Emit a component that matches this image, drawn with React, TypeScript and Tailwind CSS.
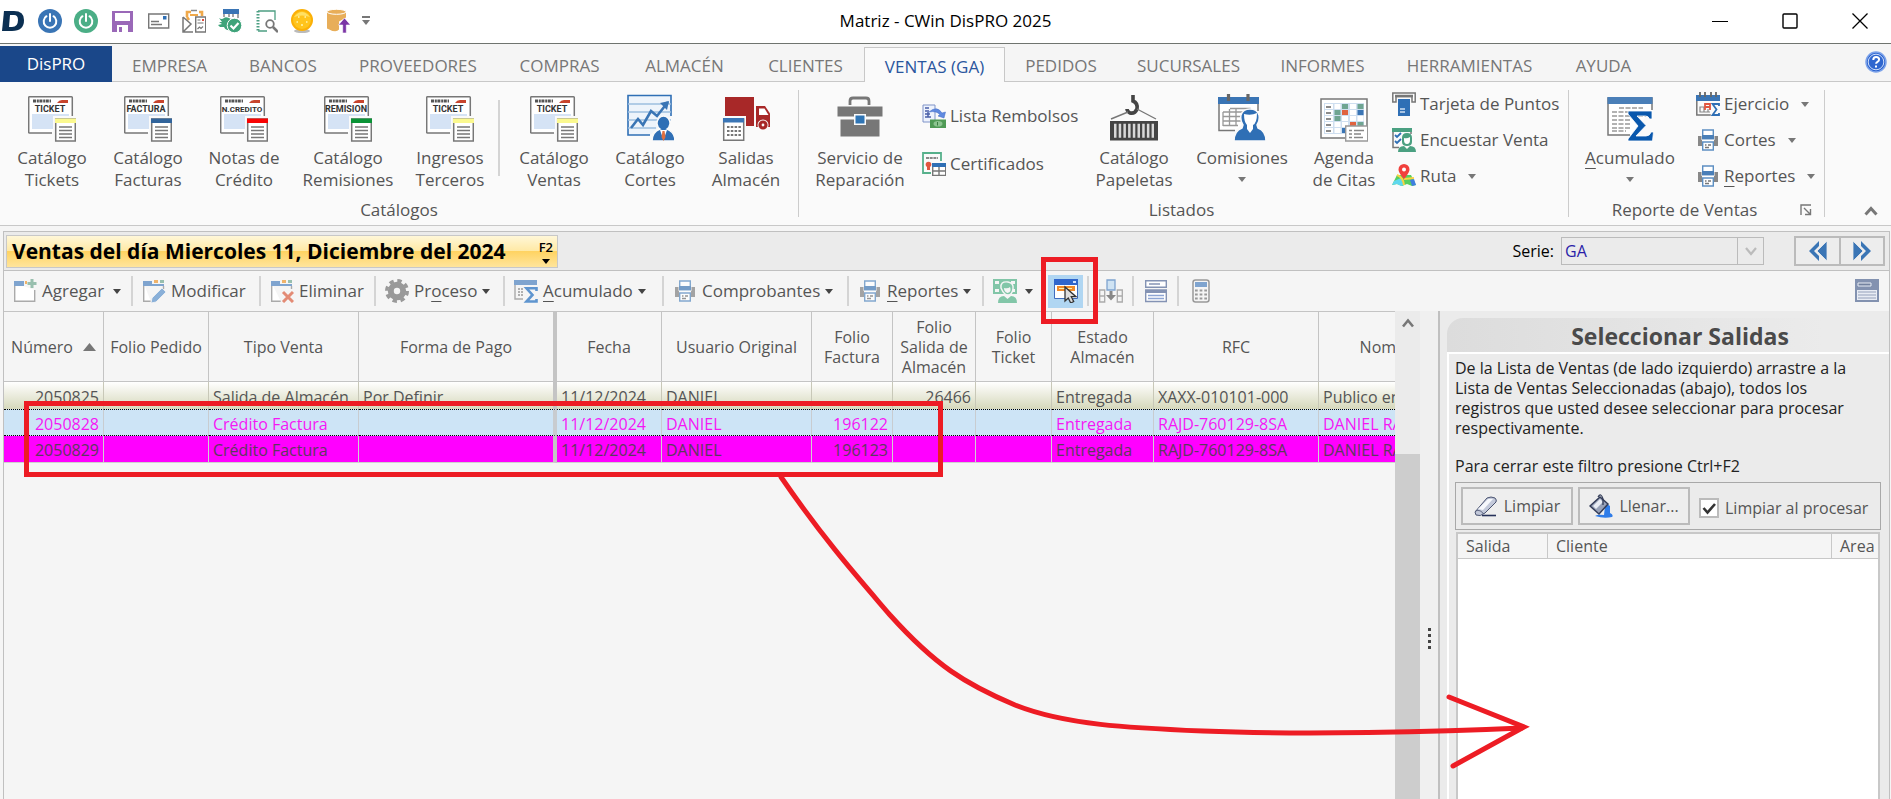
import { ReactNode } from 'react';

type IconProps = { children: ReactNode; className?: string; box?: string };

function Svg({ children, className = 'w-6 h-6', box = '0 0 24 24' }: IconProps) {
  return (
    <svg viewBox={box} fill="none" aria-hidden="true" className={`shrink-0 ${className}`}>
      {children}
    </svg>
  );
}

function Big({ children }: { children: ReactNode }) {
  return (
    <Svg box="0 0 48 48" className="w-12 h-12">
      {children}
    </Svg>
  );
}

function Caret({ className = 'text-[#777]' }: { className?: string }) {
  return (
    <svg viewBox="0 0 8 5" aria-hidden="true" className={`w-2 h-[5px] shrink-0 ${className}`}>
      <path d="M0 0h8L4 5z" fill="currentColor" />
    </svg>
  );
}

/* ---------- Small icons ---------- */

const Power = ({ color }: { color: string }) => (
  <Svg>
    <circle cx="12" cy="12" r="12" fill={color} />
    <path d="M8.500 7.200a6.300 6.300 0 1 0 7 0" stroke="#fff" strokeWidth="2" strokeLinecap="round" />
    <path d="M12 5v7" stroke="#fff" strokeWidth="2" strokeLinecap="round" />
  </Svg>
);

const Save = () => (
  <Svg>
    <path d="M2 2h21v21H2z" fill="#9a68b8" />
    <path d="M5 4h15v8H5zM7 16h11v7H7z" fill="#fff" />
    <path d="M9 18h3v5H9z" fill="#9a68b8" />
  </Svg>
);

const Mail = () => (
  <Svg>
    <path d="M2.700 5h20v14h-20z" fill="#fff" stroke="#777" strokeWidth="1.400" />
    <path d="M5 12.500h8M5 15.500h11" stroke="#777" strokeWidth="1.400" />
    <path d="M17 7h3.500v3.500H17z" fill="#2f6fb5" />
  </Svg>
);

const MailForm = () => (
  <Svg>
    <path d="M5 8V3h4M17 3h3v4M5 8l2 3" stroke="#f0a94a" strokeWidth="2.600" />
    <path d="M9 1.500h6" stroke="#888" strokeWidth="1.500" />
    <path d="M8 5h8v2H8z" fill="#f0a94a" />
    <path d="M1 8v15h10M1 8l8 7-8 8M1 8v15" stroke="#777" strokeWidth="1.500" />
    <path d="M13.700 8h10v15h-10z" fill="#fff" stroke="#777" strokeWidth="1.400" />
    <path d="M15.500 11h3M15.500 14h6M15.500 20l2-2 1.500 1.500 2-2" stroke="#777" strokeWidth="1.200" />
    <path d="M20 10h2v2h-2z" fill="#e04a3a" />
  </Svg>
);

const DbCheck = () => (
  <Svg>
    <path d="M5 0h16v5H5z" fill="#3a75b5" />
    <path d="M6 5v3M20 5v4M11 5v3M15 5v3" stroke="#777" strokeWidth="1.300" />
    <path d="M1 9q3 2 5 0t7 1v11q-5 1-7-3H2l-2-2 4-1-3-2h3z" fill="#3fa37a" />
    <circle cx="16.500" cy="16.500" r="7.300" fill="#3fa37a" stroke="#fff" />
    <path d="M12.500 16.500l3 3 5-5.500" stroke="#fff" strokeWidth="2.200" />
  </Svg>
);

const BookSearch = () => (
  <Svg>
    <path d="M4 2h17v9M4 22h9" stroke="#4d9f83" strokeWidth="1.300" />
    <path d="M4 2v20" stroke="#4d9f83" strokeWidth="3" strokeDasharray="1.500 1.500" />
    <circle cx="16" cy="15" r="3.800" stroke="#777" strokeWidth="1.800" />
    <path d="M19 18l5 5" stroke="#777" strokeWidth="2.600" />
  </Svg>
);

const Smile = () => (
  <Svg>
    <ellipse cx="12" cy="22" rx="8" ry="2" fill="#bbb" />
    <circle cx="12" cy="11" r="11" fill="#fbb007" />
    <circle cx="12" cy="11" r="9" fill="#ffc41c" />
    <path d="M4 8q8-10 16 0-8-3-16 0z" fill="#ffe063" />
    <path d="M8 8h1.500M14.500 8H16M6.500 13H8M16 13h1.500M11 16h2" stroke="#fff3b0" strokeWidth="1.600" />
  </Svg>
);

const DbUp = () => (
  <Svg>
    <path d="M1 2.500v17q9 5 12 1v-8l7-4v-6z" fill="#e8ae59" />
    <ellipse cx="10.500" cy="2.800" rx="9.500" ry="2.500" fill="#e8ae59" stroke="#fff" strokeWidth="1" />
    <path d="M18.500 9l6 7h-4.200v8h-3.600v-8h-4.200z" fill="#7b35a5" stroke="#fff" strokeWidth=".6" />
  </Svg>
);

const Printer = ({ soft = false }: { soft?: boolean }) => (
  <Svg className={soft ? 'w-6 h-6 opacity-75' : 'w-6 h-6'}>
    <path d="M2 8h3.500v6H2zM18.500 8H22v6h-3.500z" fill="#888" />
    <path d="M2 12h20v6H2z" fill="#888" />
    <path d="M6.700 2h10.600v9H6.700z" fill="#fff" stroke="#5d8fc2" strokeWidth="1.400" />
    <path d="M6 7h12v4.500H6z" fill="#4a7fb8" />
    <path d="M6 11.500h12V14H6z" fill="#fff" />
    <path d="M6.700 14h10.600v8H6.700z" fill="#fff" stroke="#5d8fc2" strokeWidth="1.400" />
    <path d="M9 17h1.500M12 17h3M9 19.500h4" stroke="#777" strokeWidth="1.400" />
  </Svg>
);

const Refund = () => (
  <Svg>
    <path d="M1 1h12v17H1z" fill="#eef3fd" stroke="#7f93c8" />
    <path d="M3 4h4M3 7h2M3 10h5M3 13h6M6 6v7" stroke="#4a5fa8" strokeWidth="1.500" />
    <path d="M7 8q8-7 13 1l3.500-1L22 14l-6-2 2-1.500q-4-4-11-2.500z" fill="#5f8ae0" stroke="#3f68c4" strokeWidth=".5" />
    <path d="M8 15.500h16V24H8z" fill="#4f9a55" />
    <ellipse cx="16" cy="19.700" rx="4.500" ry="2.800" fill="#8cc490" />
    <path d="M15.500 18v3.500" stroke="#3d7f43" />
  </Svg>
);

const Certificate = () => (
  <Svg>
    <path d="M9 21H1V1h18v8" stroke="#56b08b" strokeWidth="1.800" />
    <path d="M4 6h12" stroke="#888" strokeWidth="2" strokeDasharray="3 .7" />
    <circle cx="6.500" cy="12.500" r="2.800" fill="#e0563f" />
    <path d="M5 14h3v4H5z" fill="#e0563f" />
    <path d="M10.700 12h13v11.500h-13z" fill="#fff" stroke="#777" strokeWidth="1.400" />
    <path d="M10 11h14v4H10z" fill="#2f6fb5" />
    <path d="M17 15v8M11 19h13" stroke="#777" strokeWidth="1.400" />
  </Svg>
);

const Card = () => (
  <Svg>
    <path d="M.8 10V1h22.400v9H20V4.500H4V10z" fill="#fff" stroke="#777" strokeWidth="1.500" />
    <path d="M3 4h18" stroke="#777" strokeWidth="2.500" />
    <path d="M6 7h12v17H6z" fill="#2f6fb5" />
    <path d="M8 17h5M8 20h5" stroke="#cfe0f2" strokeWidth="1.400" />
  </Svg>
);

const Survey = () => (
  <Svg>
    <path d="M1 3v16.500h6M19 3v3" stroke="#777" strokeWidth="1.500" />
    <path d="M0 0h20v4H0z" fill="#4aa081" />
    <path d="M3 7l2 2 4-4M3 13l2 2 4-4" stroke="#2f6fb5" strokeWidth="1.800" />
    <path d="M10 10q0-5 5-5t5 5v4q0 4-5 4t-5-4z" fill="#4aa081" />
    <path d="M12 10q3 1 6-1v3q0 4-3 4t-3-4z" fill="#fff" />
    <path d="M6 24q0-6 6-6l3 3 3-3q6 0 6 6z" fill="#4aa081" />
  </Svg>
);

const MapPin = () => (
  <Svg>
    <path d="M0 21l5-10h14l5 10-4 1-5-2-5 2-5-2z" fill="#58cf5f" />
    <path d="M2 17l7-3 3 7-3 1-4-2-5 1z" fill="#5fd8ee" />
    <path d="M5 11q6 2 7 10M12 15l10-1" stroke="#f8d443" strokeWidth="2" />
    <path d="M18 16l4-1 2 6-4 1z" fill="#3f7fe0" />
    <path d="M12 0a5.500 5.500 0 0 1 5.500 5.500C17.500 9 12 15 12 15S6.500 9 6.500 5.500A5.500 5.500 0 0 1 12 0z" fill="#f1403c" />
    <circle cx="12" cy="5.500" r="2" fill="#fff" />
  </Svg>
);

const Exercise = () => (
  <Svg>
    <path d="M.8 9v14h14" stroke="#777" strokeWidth="1.500" />
    <path d="M0 3h24v6H0z" fill="#3a75b5" />
    <path d="M4 0v5M9 0v5M15 0v5M20 0v5" stroke="#666" strokeWidth="1.800" />
    <path d="M4 15h4v5H4zM12 20v-3M8 20h6" stroke="#888" strokeWidth="1.200" />
    <path d="M9 18v-6h5v6M9 15h5" stroke="#e0563f" strokeWidth="1.800" />
    <path d="M23 14v-2h-6.500l4 5.500-4 5.500H23v-2" stroke="#2f6fb5" strokeWidth="1.800" />
  </Svg>
);

const AddWin = () => (
  <Svg>
    <path d="M1.700 4v18.300h20V11" fill="#fff" stroke="#aaa" strokeWidth="1.400" />
    <path d="M1 2h10v5H1z" fill="#7fa4cf" />
    <path d="M12 2h2v3h-2z" fill="#f0b36a" />
    <path d="M19 0v9M14.500 4.500h9" stroke="#98bfae" strokeWidth="3" />
  </Svg>
);

const EditWin = () => (
  <Svg>
    <path d="M1.700 4v18.300h7M21.500 7v3" fill="#fff" stroke="#aaa" strokeWidth="1.400" />
    <path d="M1 2h9v5H1zM10 5h12v2H10z" fill="#7fa4cf" />
    <path d="M12 1h4v3h-4z" fill="#f0b36a" />
    <path d="M18 1h4v3h-4z" fill="#98bfae" />
    <path d="M10 19L20 9l4 4-10 10-5 1z" fill="#8ab0d8" stroke="#f5f5f5" strokeWidth=".8" />
  </Svg>
);

const DelWin = () => (
  <Svg>
    <path d="M1.700 4v18.300h9M21.500 7v3" fill="#fff" stroke="#aaa" strokeWidth="1.400" />
    <path d="M1 2h9v5H1zM10 5h12v2H10z" fill="#7fa4cf" />
    <path d="M12 1h4v3h-4z" fill="#f0b36a" />
    <path d="M18 1h4v3h-4z" fill="#98bfae" />
    <path d="M13 13l10 10M23 13L13 23" stroke="#e38b75" strokeWidth="3" />
  </Svg>
);

const Gear = () => (
  <Svg>
    <circle cx="12" cy="12" r="10.300" stroke="#999" strokeWidth="3.400" strokeDasharray="4.400 3.690" />
    <circle cx="12" cy="12" r="6.200" stroke="#999" strokeWidth="6" />
  </Svg>
);

const SumWin = () => (
  <Svg>
    <path d="M1 4v16h8" stroke="#aaa" strokeWidth="1.400" />
    <path d="M0 1h23v5H0z" fill="#7fa4cf" />
    <path d="M4 10h6M4 13h5M4 16h5" stroke="#999" strokeWidth="1.400" strokeDasharray="2 1" />
    <path d="M22.500 12v-2.700H12.500l6 6.700-6 6.500h10V20" stroke="#5f95cf" strokeWidth="2.600" />
  </Svg>
);

const MoneyUser = () => (
  <Svg>
    <path d="M0 0h24v15H0z" fill="#82c6a8" />
    <path d="M2 2h4v3H2zM2 10h4v3H2zM18 2h4v3h-4zM18 10h4v3h-4z" fill="#f5f5f5" />
    <path d="M8 9q-1-7 7-6 6 1 5 7-1 6-5 6t-7-7z" fill="#82c6a8" stroke="#f5f5f5" strokeWidth="1.500" />
    <path d="M11 9q4 1 6-1 2 5-2.500 6Q11 13 11 9z" fill="#f5f5f5" />
    <path d="M5 24q0-7 6-7l3.500 3 3.500-3q6 0 6 7z" fill="#82c6a8" />
  </Svg>
);

const PickWin = () => (
  <Svg>
    <path d="M.5 .5h23v19H.5z" fill="#fff" stroke="#3f6dbf" />
    <path d="M0 0h24v6H0z" fill="#2f66cc" />
    <path d="M19 2h3v2h-3z" fill="#cfe0ff" />
    <path d="M3 7h18v5H3z" fill="#f08b2a" />
    <path d="M5 9.500h13" stroke="#fff2a8" />
    <path d="M11 8v14l3.300-3 2.400 5 3-1.500-2.400-4.800H22z" fill="#ddd" stroke="#333" strokeWidth="1.300" />
  </Svg>
);

const Merge = () => (
  <Svg>
    <path d="M8 1h8v10H8z" fill="#cfe3f3" stroke="#7fa4cf" strokeWidth="1.300" />
    <path d="M.7 11h5v12h-5zM18.300 11h5v12h-5zM1 17h4.500M18.500 17H23" stroke="#aaa" strokeWidth="1.300" />
    <path d="M10.500 12h3v4H17l-5 5.500L7 16h3.500z" fill="#888" />
  </Svg>
);

const Rows = () => (
  <Svg>
    <path d="M1.700 1.700h20.600v6.600H1.700zM1.700 11h20.600v11.500H1.700z" fill="#fff" stroke="#8493b4" strokeWidth="1.400" />
    <path d="M2 11h20v3H2z" fill="#8493b4" />
    <path d="M5 5h11" stroke="#8493b4" strokeWidth="1.500" />
    <path d="M4 16.500h16M4 19.500h16" stroke="#8da5d4" strokeWidth="1.400" />
  </Svg>
);

const Calc = () => (
  <Svg>
    <rect x="4" y="1" width="16" height="22" rx="2.500" stroke="#999" strokeWidth="1.500" />
    <path d="M6 3h12v5H6z" fill="#7fa4cf" />
    <path d="M6 11.500h12M6 15.500h12M6 19.500h12" stroke="#999" strokeWidth="2.200" strokeDasharray="2.700 1.950" />
  </Svg>
);

const Panel = () => (
  <Svg>
    <path d="M0 0h24v23H0z" fill="#8392b0" />
    <path d="M3 4h13v3H3z" fill="#73829f" stroke="#e8ecf4" />
    <path d="M2 11h20v10H2z" fill="#e8ecf4" />
    <path d="M3 13h18M3 16h18M3 19h18" stroke="#93a0ba" strokeWidth="1.200" />
  </Svg>
);

const Eraser = () => (
  <Svg>
    <path d="M8 21.500h14" stroke="#27325a" strokeWidth="1.600" />
    <path d="M1 18L13 4q4-2 8 0 2 2 1 4L11 19q-5 4-9 2z" fill="#c3c9da" stroke="#4a5370" strokeWidth="1" />
    <path d="M4 15L14 5h5L9 16z" fill="#f6f8fc" />
    <path d="M1.500 17q5-2 8 3" stroke="#4a5370" strokeWidth=".8" />
  </Svg>
);

const Bucket = () => (
  <Svg>
    <path d="M6 22q3-2 9-1l1-9q2-3 5 0v7q4 2 2 4-8 2-17-1z" fill="#2f7ce8" />
    <path d="M1 12l10-9 8 7-9 10z" fill="#98a2b8" stroke="#333c58" strokeWidth="1.500" />
    <path d="M4 12l7-7 3 3-7 7z" fill="#e8ecf4" />
    <path d="M9 3q3-5 5 2v6" stroke="#333c58" strokeWidth="1.300" />
  </Svg>
);

/* ---------- Large ribbon icons ---------- */

function TicketIcon({ text, accent }: { text: string; accent: string }) {
  return (
    <Big>
      <path d="M24 39H1.500q-.8 0-.8-.8V3.500q0-.8.8-.8h42q.8 0 .8.8V22" fill="#fff" stroke="#777" strokeWidth="1.500" />
      <path d="M4 20h37v15H4z" fill="#d5e3f5" />
      <path d="M5 7h18" stroke="#555" strokeWidth="3" strokeDasharray="3 .8 2 .6" />
      <path d="M29 9q2-3 5-3h6v3z" fill="#c8452e" />
      <text
        x="22"
        y="18"
        textAnchor="middle"
        fontSize={text.length > 8 ? 8 : 9}
        fontWeight="700"
        fontFamily="'Liberation Sans Narrow',Roboto,sans-serif"
        fill="#333"
      >
        {text}
      </text>
      <path d="M25 22h23v26H25z" fill="#fafafa" />
      <path d="M27.700 25h19.600v22H27.700z" fill="#fff" stroke="#777" strokeWidth="1.500" />
      <path d="M27 24.500h21V29H27z" fill={accent} />
      <path d="M31 33h13M31 36.500h13M31 40h13M31 43.500h13" stroke="#777" strokeWidth="1.500" />
    </Big>
  );
}

const ChartUser = () => (
  <Big>
    <path d="M24 41H2V1.500h43V22" fill="#eef4fb" stroke="#2f6fb5" strokeWidth="1.600" />
    <path d="M2 10h43M2 18h43M2 26h43M2 34h28" stroke="#9dbfe0" strokeWidth="1.500" />
    <path d="M5 34l7-9 5 6 8-14 6 5L42 8" stroke="#3a75b5" strokeWidth="2.600" />
    <path d="M34 9l9-2-2 9z" fill="#3a75b5" />
    <path d="M26 47q0-9 8-12a6.500 7 0 1 1 7 0q8 3 8 12z" fill="#2f6fb5" stroke="#fafafa" strokeWidth="1.500" />
    <path d="M34 36h7l-3.500 10z" fill="#fff" />
    <path d="M36.500 37h2l1 6-2 4-2-4z" fill="#e0703f" />
  </Big>
);

const Truck = () => (
  <Big>
    <path d="M3 3h29v29H24V22H3z" fill="#a82828" />
    <path d="M34 12h9l6 9v12H34z" fill="#a82828" />
    <path d="M37 14.500h5.500l4 6.500H37z" fill="#fff" />
    <circle cx="41" cy="31" r="5.500" fill="#fafafa" />
    <circle cx="41" cy="31" r="3" stroke="#a82828" strokeWidth="3.200" />
    <path d="M1.700 25h20v21.300h-20z" fill="#fff" stroke="#777" strokeWidth="1.500" />
    <path d="M1 24h21v4.500H1z" fill="#3a75b5" />
    <path d="M5 33h14M5 37h14M5 41h14" stroke="#777" strokeWidth="1.800" strokeDasharray="2.500 1.300" />
  </Big>
);

const Toolbox = () => (
  <Big>
    <path d="M14 11V7q0-3 3-3h13q3 0 3 3v4" stroke="#777" strokeWidth="2.800" />
    <path d="M1.500 12.500h45v10h-45z" fill="#777" />
    <path d="M4.500 25.500h39v17h-39z" fill="#777" />
    <path d="M18 20h12v11H18z" fill="#fafafa" />
    <path d="M19.500 21.500h9v8h-9z" fill="#2f75b5" />
  </Big>
);

const Container = () => (
  <Big>
    <path d="M23 1v6q5 2 4 8-2 5-7 4-3-2-3-4" stroke="#444" strokeWidth="3.600" />
    <path d="M1 25l17-7M46 25L27 15" stroke="#777" strokeWidth="1.400" />
    <path d="M0 27h48v19.500H0z" fill="#444" />
    <path d="M4 36.700h40" stroke="#d8d8d8" strokeWidth="14" strokeDasharray="2.500 2.200" />
  </Big>
);

const Commission = () => (
  <Big>
    <path d="M17 36.500H1V5h39v12" fill="#fff" stroke="#777" strokeWidth="1.500" />
    <path d="M0 3h41v7H0z" fill="#3a75b5" />
    <path d="M10.500 0v7M30 0v7" stroke="#666" strokeWidth="3.200" />
    <path d="M5 18h22M5 22.500h20M5 27h18M5 31.500h15M5 18v14M11.500 15v17M18 14v18M12 14.500h20v8" stroke="#999" strokeWidth="1.300" />
    <path d="M16 47q0-10 8-13l1-3q-3-4-2-10 2-6 9-6t9 6q1 6-2 10l1 3q8 3 8 13z" fill="#2f6fb5" stroke="#fafafa" strokeWidth="1.500" />
    <path d="M26 20q7 2 13-1 0 10-4 12v4l-3 4-3-4v-4q-3-3-3-11z" fill="#fff" />
  </Big>
);

const Agenda = () => (
  <Big>
    <path d="M1 5h46v39H1z" fill="#fff" stroke="#777" strokeWidth="1.500" />
    <path d="M4 9h40v31H4z" fill="#cfdff0" />
    <path d="M5 12.500h8M5 18.500h8M5 24.500h8M5 30.500h8M5 36.500h8" stroke="#fff" strokeWidth="5" />
    <path d="M6 13h5M6 19h5M6 25h5M6 31h5M6 37h5" stroke="#666" strokeWidth="1.400" />
    <path d="M14.500 10h6v5h-6zM30 10h6v5h-6zM30 16h6v5h-6zM22 22h6v5h-6zM30 22h6v5h-6zM37.500 22h6v5h-6zM14.500 28h6v5h-6zM22 28h6v5h-6zM14.500 34h6v5h-6z" fill="#fff" />
    <path d="M22 10h6v5h-6zM37.500 10h6v5h-6zM14.500 16h6v5h-6zM14.500 22h6v5h-6zM37.500 28h6v5h-6z" fill="#6fa592" />
    <path d="M22 16h6v5h-6zM30 28h6v5h-6z" fill="#e0633f" />
    <path d="M37.500 16h6v5h-6zM22 34h6v5h-6z" fill="#3a75b5" />
    <path d="M25.700 32h22v15h-22z" fill="#fff" stroke="#999" strokeWidth="1.400" />
    <path d="M29 36.500h3M34 36.500h10M29 40h3M34 40h7M29 43.500h3M34 43.500h9" stroke="#888" strokeWidth="1.400" />
  </Big>
);

const Summary = () => (
  <Big>
    <path d="M24 41H2V4h44v12" fill="#fff" stroke="#777" strokeWidth="1.500" />
    <path d="M1.500 3h45v7h-45z" fill="#4a7fb8" />
    <path d="M13 14h24M6 18h38M6 22h34M6 26h18M6 30h18M6 34h18M6 37h14" stroke="#999" strokeWidth="1.400" strokeDasharray="5 1.500" />
    <path d="M22 17h24v8h-2.500q-1-3-4-3H31l9 9.500L30 42h10q4 0 5-4h2.500l-1 9H22v-2l10-13-10-12z" fill="#0a58ad" stroke="#fff" strokeWidth=".8" />
  </Big>
);

/* ---------- Title bar ---------- */

function TitleBar() {
  const quick = [
    { name: 'Conectar', icon: <Power color="#3a75b5" /> },
    { name: 'Iniciar', icon: <Power color="#4bae86" /> },
    { name: 'Guardar', icon: <Save /> },
    { name: 'Correo', icon: <Mail /> },
    { name: 'Formatos', icon: <MailForm /> },
    { name: 'Verificar', icon: <DbCheck /> },
    { name: 'Buscar', icon: <BookSearch /> },
    { name: 'Ánimo', icon: <Smile /> },
    { name: 'Respaldo', icon: <DbUp /> },
  ];

  return (
    <header className="grid grid-cols-[1fr_auto_1fr] items-center h-11 shrink-0 bg-white border-b border-[#6f746f]">
      <div className="flex items-center gap-3 pb-[2px]">
        <Svg box="0 0 26 24" className="w-[26px] h-6">
          <path d="M4 2h10q10 0 10 9 0 11-12 11H2z" fill="#0b2f52" />
          <path d="M10 6h4q4 0 4 5 0 7-6 7H9z" fill="#fff" />
        </Svg>
        {quick.map((q) => (
          <button key={q.name} aria-label={q.name}>
            {q.icon}
          </button>
        ))}
        <button aria-label="Personalizar" className="flex flex-col items-center gap-[2px]">
          <span className="w-2 h-[2px] bg-[#777]" />
          <Caret />
        </button>
      </div>
      <h1 className="text-[17px] leading-5 pb-[2px]">Matriz - CWin DisPRO 2025</h1>
      <div className="flex justify-end items-center gap-[54px] pr-[23px] pb-[2px]">
        <button aria-label="Minimizar">
          <Svg box="0 0 16 16" className="w-4 h-4">
            <path d="M0 8.500h16" stroke="#000" />
          </Svg>
        </button>
        <button aria-label="Maximizar">
          <Svg box="0 0 16 16" className="w-4 h-4">
            <rect x="1" y="1" width="14" height="14" rx="1" stroke="#000" strokeWidth="1.400" />
          </Svg>
        </button>
        <button aria-label="Cerrar">
          <Svg box="0 0 16 16" className="w-4 h-4">
            <path d="M.5.5l15 15M15.500.5l-15 15" stroke="#000" strokeWidth="1.300" />
          </Svg>
        </button>
      </div>
    </header>
  );
}

/* ---------- Tabs ---------- */

const tabs = [
  { label: 'EMPRESA', width: 'w-[115px]' },
  { label: 'BANCOS', width: 'w-[112px]' },
  { label: 'PROVEEDORES', width: 'w-[158px]' },
  { label: 'COMPRAS', width: 'w-[125px]' },
  { label: 'ALMACÉN', width: 'w-[125px]' },
  { label: 'CLIENTES', width: 'w-[117px]' },
  { label: 'VENTAS (GA)', width: 'w-[141px]', active: true },
  { label: 'PEDIDOS', width: 'w-[112px]' },
  { label: 'SUCURSALES', width: 'w-[143px]' },
  { label: 'INFORMES', width: 'w-[125px]' },
  { label: 'HERRAMIENTAS', width: 'w-[169px]' },
  { label: 'AYUDA', width: 'w-[99px]' },
];

function Tabs() {
  return (
    <nav className="flex items-end h-[38px] shrink-0 bg-[#f5f5f5] text-[17px] leading-6 whitespace-nowrap">
      <button className="w-28 h-9 bg-[#1a4789] text-white">DisPRO</button>
      {tabs.map((t) => (
        <button
          key={t.label}
          className={`${t.width} h-[35px] pt-[3px] ${
            t.active
              ? 'bg-[#fafafa] border border-b-0 border-[#c8c8c8] text-[#2a569e]'
              : 'border-b border-[#c8c8c8] text-[#777]'
          }`}
        >
          {t.label}
        </button>
      ))}
      <div className="flex-1 flex justify-end h-[35px] pr-1 pt-[3px] border-b border-[#c8c8c8]">
        <button aria-label="Ayuda" className="h-6">
          <Svg box="0 0 22 22" className="w-[22px] h-[22px]">
            <circle cx="11" cy="11" r="10" fill="#2f66cf" stroke="#7da3ea" strokeWidth="1.500" />
            <circle cx="11" cy="11" r="7.800" stroke="#cfdefa" />
            <path d="M8.300 9q0-3 2.800-3 3 0 3 2.500 0 1.500-1.600 2.300-1.400.8-1.400 2M11 14.500v2" stroke="#fff" strokeWidth="2" />
          </Svg>
        </button>
      </div>
    </nav>
  );
}

/* ---------- Ribbon ---------- */

type BigButtonProps = { icon: ReactNode; lines: string[]; width: string; caret?: boolean; hotkey?: boolean };

function BigButton({ icon, lines, width, caret, hotkey }: BigButtonProps) {
  return (
    <button className={`${width} shrink-0 flex flex-col items-center pt-3`}>
      {icon}
      <span className="mt-[5px] flex flex-col items-center">
        {lines.map((l, i) => (
          <span key={l}>
            {hotkey && i === 0 ? (
              <>
                <u className="underline-offset-4">{l[0]}</u>
                {l.slice(1)}
              </>
            ) : (
              l
            )}
          </span>
        ))}
      </span>
      {caret && (
        <span className="pt-2">
          <Caret />
        </span>
      )}
    </button>
  );
}

type SmallButtonProps = { icon: ReactNode; label: string; caret?: boolean; hotkey?: boolean };

function SmallButton({ icon, label, caret, hotkey }: SmallButtonProps) {
  return (
    <button className="flex items-center gap-1 h-6">
      {icon}
      <span>
        {hotkey ? (
          <>
            <u className="underline-offset-4">{label[0]}</u>
            {label.slice(1)}
          </>
        ) : (
          label
        )}
      </span>
      {caret && (
        <span className="pl-2">
          <Caret />
        </span>
      )}
    </button>
  );
}

function Group({ label, className = '', launcher, children }: {
  label: string;
  className?: string;
  launcher?: boolean;
  children: ReactNode;
}) {
  return (
    <section className={`shrink-0 flex flex-col my-2 h-[127px] border-r border-[#ccc] ${className}`}>
      <div className="flex h-[107px] shrink-0 -mt-2">{children}</div>
      <div className="flex items-center h-5 mt-[11px] mr-1">
        <span className="flex-1 text-center">{label}</span>
        {launcher && (
          <button aria-label="Más opciones" className="w-5">
            <Svg box="0 0 12 12" className="w-3 h-3">
              <path d="M1 11V1h10M4 4l6 6M10.500 5v5.500H5" stroke="#777" strokeWidth="1.400" />
            </Svg>
          </button>
        )}
      </div>
    </section>
  );
}

function Ribbon() {
  return (
    <div className="flex shrink-0 h-36 bg-[#fafafa] border-b border-[#c8c8c8] text-[17px] leading-[22px] text-[#555] whitespace-nowrap">
      <Group label="Catálogos" className="w-[799px] pl-1">
        <BigButton width="w-24" icon={<TicketIcon text="TICKET" accent="#fbf98f" />} lines={['Catálogo', 'Tickets']} />
        <BigButton width="w-24" icon={<TicketIcon text="FACTURA" accent="#31649b" />} lines={['Catálogo', 'Facturas']} />
        <BigButton width="w-24" icon={<TicketIcon text="N.CREDITO" accent="#f80303" />} lines={['Notas de', 'Crédito']} />
        <BigButton width="w-28" icon={<TicketIcon text="REMISION" accent="#0a9336" />} lines={['Catálogo', 'Remisiones']} />
        <BigButton width="w-[92px]" icon={<TicketIcon text="TICKET" accent="#fbf98f" />} lines={['Ingresos', 'Terceros']} />
        <div className="w-[2px] h-[76px] mt-[18px] ml-[2px] mr-[6px] bg-[#d4d4d4]" />
        <BigButton width="w-24" icon={<TicketIcon text="TICKET" accent="#fbf98f" />} lines={['Catálogo', 'Ventas']} />
        <BigButton width="w-24" icon={<ChartUser />} lines={['Catálogo', 'Cortes']} />
        <BigButton width="w-24" icon={<Truck />} lines={['Salidas', 'Almacén']} />
      </Group>

      <Group label="Listados" className="w-[770px]">
        <BigButton width="w-[122px]" icon={<Toolbox />} lines={['Servicio de', 'Reparación']} />
        <div className="flex flex-col gap-6 w-[165px] pl-[1px] pt-[22px]">
          <SmallButton icon={<Refund />} label="Lista Rembolsos" />
          <SmallButton icon={<Certificate />} label="Certificados" />
        </div>
        <BigButton width="w-24" icon={<Container />} lines={['Catálogo', 'Papeletas']} />
        <BigButton width="w-[120px]" icon={<Commission />} lines={['Comisiones']} caret />
        <BigButton width="w-[84px]" icon={<Agenda />} lines={['Agenda', 'de Citas']} />
        <div className="flex flex-col gap-3 pl-[6px] pt-[10px]">
          <SmallButton icon={<Card />} label="Tarjeta de Puntos" />
          <SmallButton icon={<Survey />} label="Encuestar Venta" />
          <SmallButton icon={<MapPin />} label="Ruta" caret />
        </div>
      </Group>

      <Group label="Reporte de Ventas" className="w-64" launcher>
        <BigButton width="w-[122px]" icon={<Summary />} lines={['Acumulado']} caret hotkey />
        <div className="flex flex-col gap-3 pl-[5px] pt-[10px]">
          <SmallButton icon={<Exercise />} label="Ejercicio" caret />
          <SmallButton icon={<Printer />} label="Cortes" caret />
          <SmallButton icon={<Printer />} label="Reportes" caret hotkey />
        </div>
      </Group>

      <div className="flex-1 flex justify-end items-end pr-[13px] pb-[9px]">
        <button aria-label="Contraer cinta">
          <Svg box="0 0 14 11" className="w-[14px] h-[11px]">
            <path d="M1.500 9.500L7 3.500l5.500 6" stroke="#777" strokeWidth="3" />
          </Svg>
        </button>
      </div>
    </div>
  );
}

/* ---------- View header ---------- */

function ViewHeader() {
  return (
    <div className="flex items-center justify-between h-[39px] shrink-0 px-[2px] bg-[#ebebeb] border-b border-[#c0c0c0]">
      <button className="flex items-center justify-between w-[552px] h-[33px] pl-[5px] pr-1 border border-[#c8c8c8] bg-[linear-gradient(#fff7d8,#ffe9a5_48%,#ffd362_50%,#ffe59c)] text-black">
        <span className="text-[21px] leading-6 font-bold whitespace-nowrap">
          Ventas del día Miercoles 11, Diciembre del 2024
        </span>
        <span className="flex flex-col items-center gap-1 text-[13px] leading-4 font-semibold">
          F2
          <Caret className="text-black" />
        </span>
      </button>

      <div className="flex items-center h-[30px] pr-[2px]">
        <label htmlFor="serie" className="pr-[7px] text-[16px] text-black">
          Serie:
        </label>
        <div className="grid w-[203px] h-7 mr-[30px] border border-[#bbb]">
          <select
            id="serie"
            className="col-start-1 row-start-1 appearance-none pl-[3px] text-[16px] leading-5 text-[#2a1ea8] outline-none"
          >
            <option>GA</option>
          </select>
          <span className="col-start-1 row-start-1 justify-self-end grid place-items-center w-[26px] border-l border-[#bbb] pointer-events-none">
            <Svg box="0 0 12 10" className="w-3 h-[10px]">
              <path d="M1 2l5 6 5-6" stroke="#bbb" strokeWidth="2.200" />
            </Svg>
          </span>
        </div>
        <button aria-label="Anterior" className="grid place-items-center w-[45px] h-[30px] border-2 border-r-0 border-[#bbb] bg-[#ededed]">
          <Svg box="0 0 20 20" className="w-5 h-5">
            <path d="M11 0v5L6 10l5 5v5L1 10z" fill="#3a75b5" />
            <path d="M19 0v20L9 10z" fill="#3a75b5" stroke="#ededed" strokeWidth=".8" />
          </Svg>
        </button>
        <button aria-label="Siguiente" className="grid place-items-center w-[46px] h-[30px] border-2 border-[#bbb] bg-[#ededed]">
          <Svg box="0 0 20 20" className="w-5 h-5">
            <path d="M9 0v5l5 5-5 5v5l10-10z" fill="#3a75b5" />
            <path d="M1 0v20l10-10z" fill="#3a75b5" stroke="#ededed" strokeWidth=".8" />
          </Svg>
        </button>
      </div>
    </div>
  );
}

/* ---------- Toolbar ---------- */

const actions = [
  { icon: <AddWin />, pre: 'Agregar', width: 'w-[129px]', caret: true, space: 'pl-1' },
  { icon: <EditWin />, pre: 'Modificar', width: 'w-32' },
  { icon: <DelWin />, pre: 'Eliminar', width: 'w-[115px]' },
  { icon: <Gear />, pre: 'Pr', key: 'o', post: 'ceso', width: 'w-[129px]', caret: true },
  { icon: <SumWin />, pre: '', key: 'A', post: 'cumulado', width: 'w-[159px]', caret: true },
  { icon: <Printer soft />, pre: 'Comprobantes', width: 'w-[185px]', caret: true },
  { icon: <Printer soft />, pre: '', key: 'R', post: 'eportes', width: 'w-[135px]', caret: true },
];

function Toolbar() {
  return (
    <div className="flex items-center h-10 shrink-0 pr-[10px] bg-[#f5f5f5] text-[17px] text-[#555] whitespace-nowrap">
      {actions.map((a) => (
        <button
          key={a.pre + (a.post ?? '')}
          className={`${a.width} gap-[5px] shrink-0 flex items-center h-[30px] pl-[9px] border-r-2 border-[#d4d4d4]`}
        >
          {a.icon}
          <span>
            {a.pre}
            {a.key && <u className="underline-offset-4">{a.key}</u>}
            {a.post}
          </span>
          {a.caret && (
            <span className={a.space}>
              <Caret className="text-[#444]" />
            </span>
          )}
        </button>
      ))}
      <button aria-label="Cobro" className="flex items-center gap-2 pl-[9px] pr-[15px]">
        <MoneyUser />
        <Caret className="text-[#444]" />
      </button>
      <button aria-label="Seleccionar salidas" className="grid place-items-center w-[35px] h-[33px] bg-[#b0d6f2]">
        <PickWin />
      </button>
      <button aria-label="Combinar" className="flex items-center w-[47px] h-[30px] ml-1 pl-[10px] border-x-2 border-[#d4d4d4]">
        <Merge />
      </button>
      <button aria-label="Detalle" className="flex items-center w-[45px] h-[30px] pl-[10px] border-r-2 border-[#d4d4d4]">
        <Rows />
      </button>
      <button aria-label="Calculadora" className="pl-[10px]">
        <Calc />
      </button>
      <button aria-label="Mostrar panel" className="ml-auto">
        <Panel />
      </button>
    </div>
  );
}

/* ---------- Sales grid ---------- */

const columns = [
  { label: 'Número', width: 'w-[100px]', right: true },
  { label: 'Folio Pedido', width: 'w-[105px]' },
  { label: 'Tipo Venta', width: 'w-[150px]' },
  { label: 'Forma de Pago', width: 'w-[198px]', pinned: true },
  { label: 'Fecha', width: 'w-[105px]' },
  { label: 'Usuario Original', width: 'w-[150px]' },
  { label: 'Folio Factura', width: 'w-[81px]', right: true },
  { label: 'Folio Salida de Almacén', width: 'w-[83px]', right: true },
  { label: 'Folio Ticket', width: 'w-[76px]' },
  { label: 'Estado Almacén', width: 'w-[102px]' },
  { label: 'RFC', width: 'w-[165px]' },
  { label: 'Nombre', width: 'w-[144px]' },
];

const sales = [
  {
    style: 'bg-[linear-gradient(#ffffff,#d6d8bb)] text-[#555]',
    cell: 'border-[#c8c8b8]',
    values: ['2050825', '', 'Salida de Almacén', 'Por Definir', '11/12/2024', 'DANIEL', '', '26466', '', 'Entregada', 'XAXX-010101-000', 'Publico en'],
  },
  {
    style: 'bg-[#cde4f6] text-[#f516f5]',
    cell: 'border-y border-dotted border-y-black border-r-[#c8ccd0]',
    values: ['2050828', '', 'Crédito Factura', '', '11/12/2024', 'DANIEL', '196122', '', '', 'Entregada', 'RAJD-760129-8SA', 'DANIEL RA'],
  },
  {
    style: 'bg-[#ff00ff] text-[#5c3a5c]',
    cell: 'border-b border-[#d0d0d0]',
    values: ['2050829', '', 'Crédito Factura', '', '11/12/2024', 'DANIEL', '196123', '', '', 'Entregada', 'RAJD-760129-8SA', 'DANIEL RA'],
  },
];

function SalesGrid() {
  return (
    <div className="flex-1 min-w-0 overflow-hidden bg-[#f5f5f5]">
      <table className="table-fixed w-[1459px] border-separate border-spacing-0 text-[16px] text-[#555]">
        <thead>
          <tr className="h-[71px]">
            {columns.map((c, i) => (
              <th
                key={c.label}
                className={`${c.width} p-0 px-1 border-y border-[#c4c4c4] font-normal leading-5 ${
                  c.pinned ? 'border-r-4' : 'border-r'
                }`}
              >
                {i === 0 ? (
                  <span className="flex items-center justify-center gap-[10px]">
                    {c.label}
                    <Svg box="0 0 13 8" className="w-[13px] h-2">
                      <path d="M0 8h13L6.500 0z" fill="#777" />
                    </Svg>
                  </span>
                ) : (
                  c.label
                )}
              </th>
            ))}
          </tr>
        </thead>
        <tbody>
          {sales.map((s) => (
            <tr key={s.values[0]} className={`h-[27px] leading-[22px] whitespace-nowrap ${s.style}`}>
              {s.values.map((v, i) => (
                <td
                  key={i}
                  className={`p-0 px-1 pt-[2px] ${s.cell} ${columns[i].right ? 'text-right' : ''} ${
                    columns[i].pinned ? 'border-r-4 border-r-[#c4c4c4]' : 'border-r'
                  } [border-right-style:solid]`}
                >
                  {v}
                </td>
              ))}
            </tr>
          ))}
        </tbody>
      </table>
    </div>
  );
}

/* ---------- Selection panel ---------- */

function SelectionPanel() {
  return (
    <aside className="w-[451px] shrink-0 flex flex-col bg-[#ebebeb] border-l-2 border-[#c0c0c0] pl-[7px] text-[16px]">
      <h2 className="mt-[7px] h-[34px] pl-6 pt-[2px] rounded-tl-2xl bg-[linear-gradient(90deg,#dcdcdc,#ebebeb_85%)] text-center text-[23px] leading-8 font-bold text-[#4a4a4a]">
        Seleccionar Salidas
      </h2>
      <div className="flex-1 flex flex-col border-t-2 border-l-2 border-white pl-[6px] pr-2 pt-1">
        <p className="pr-5 leading-5 text-[#222]">
          De la Lista de Ventas (de lado izquierdo) arrastre a la Lista de Ventas Seleccionadas (abajo), todos los
          registros que usted desee seleccionar para procesar respectivamente.
        </p>
        <p className="mt-[18px] leading-5 text-[#222]">Para cerrar este filtro presione Ctrl+F2</p>
        <div className="flex items-center gap-[5px] h-12 mt-[6px] px-[5px] shrink-0 border border-[#a8a8a8] text-[#555] whitespace-nowrap">
          <button className="flex items-center justify-center gap-[6px] w-28 h-[38px] border-2 border-[#bbb] bg-[#eee]">
            <Eraser />
            Limpiar
          </button>
          <button className="flex items-center justify-center gap-[6px] w-28 h-[38px] border-2 border-[#bbb] bg-[#eee]">
            <Bucket />
            Llenar...
          </button>
          <label className="flex items-center gap-[6px] pl-1 pt-1">
            <span className="grid">
              <input
                type="checkbox"
                defaultChecked
                className="peer col-start-1 row-start-1 appearance-none w-5 h-5 border-2 border-[#bbb] bg-white"
              />
              <svg
                viewBox="0 0 20 20"
                fill="none"
                className="col-start-1 row-start-1 w-5 h-5 pointer-events-none invisible peer-checked:visible"
              >
                <path d="M4.500 10l4 4.500L16 6" stroke="#333" strokeWidth="2.600" />
              </svg>
            </span>
            Limpiar al procesar
          </label>
        </div>
        <div className="flex-1 mt-[2px] mx-[1px] border-2 border-b-0 border-[#c8c8c8] bg-white">
          <table className="table-fixed w-full border-separate border-spacing-0 text-[#555]">
            <thead>
              <tr className="h-6 bg-[#f5f5f5] text-left">
                <th className="w-[90px] p-0 pl-2 font-normal leading-6 border-b border-r border-[#c8c8c8]">Salida</th>
                <th className="p-0 pl-2 font-normal leading-6 border-b border-r border-[#c8c8c8]">Cliente</th>
                <th className="w-[46px] p-0 pl-2 font-normal leading-6 border-b border-[#c8c8c8]">Area</th>
              </tr>
            </thead>
          </table>
        </div>
      </div>
    </aside>
  );
}

/* ---------- Hand drawn marks over the window ---------- */

function Annotations() {
  return (
    <svg
      aria-hidden="true"
      fill="none"
      stroke="#ed1c24"
      strokeWidth="5"
      strokeLinecap="round"
      className="absolute inset-0 w-full h-full pointer-events-none"
    >
      <rect x="26.500" y="403.500" width="914" height="71" />
      <rect x="1043.500" y="259.500" width="52" height="62" />
      <path d="M781 477C825 541 860 580 890 615 935 665 965 684 1015 705 1065 725 1130 728 1203 731 1300 735 1440 732 1522 728" />
      <path d="M1449 697l75 30-71 39" />
    </svg>
  );
}

export default function App() {
  return (
    <div className="relative flex flex-col h-screen overflow-hidden bg-[#f5f5f5] font-['Open_Sans','Noto_Sans',sans-serif]">
      <TitleBar />
      <Tabs />
      <Ribbon />
      <main className="flex-1 min-h-0 flex flex-col mt-[5px] ml-[3px] mr-[1px] border border-b-0 border-[#c0c0c0]">
        <ViewHeader />
        <Toolbar />
        <div className="flex-1 min-h-0 flex">
          <SalesGrid />
          <div className="flex flex-col w-[25px] shrink-0 bg-[#ebebeb]">
            <button aria-label="Subir" className="grid place-items-center h-6">
              <Svg box="0 0 12 10" className="w-3 h-[10px]">
                <path d="M1 8.500l5-6 5 6" stroke="#777" strokeWidth="2.600" />
              </Svg>
            </button>
            <div className="flex-1 mt-[119px] bg-[#cdcdcd]" />
          </div>
          <div className="flex flex-col items-center w-[18px] shrink-0 pt-[317px] gap-[3px] bg-[#f0f0f0]">
            <span className="w-[3px] h-[3px] bg-[#444]" />
            <span className="w-[3px] h-[3px] bg-[#444]" />
            <span className="w-[3px] h-[3px] bg-[#444]" />
            <span className="w-[3px] h-[3px] bg-[#444]" />
          </div>
          <SelectionPanel />
        </div>
      </main>
      <Annotations />
    </div>
  );
}
